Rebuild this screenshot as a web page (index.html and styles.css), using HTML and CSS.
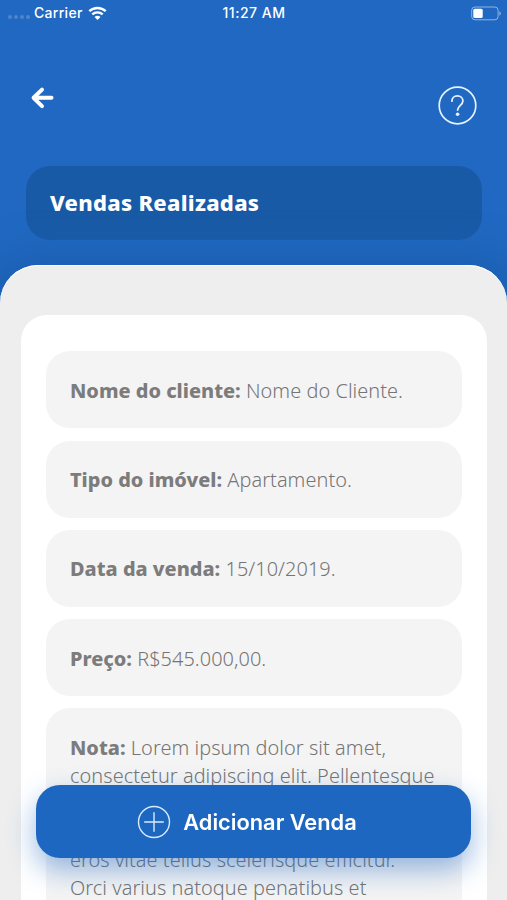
FILE: index.html
```html
<!DOCTYPE html>
<html lang="pt-BR">
<head>
  <meta charset="UTF-8">
  <meta name="viewport" content="width=device-width, initial-scale=1.0">
  <title>Vendas Realizadas</title>
  <link rel="stylesheet" href="styles.css">
</head>

<body>

  <div class="status-bar">
    <div class="carrier">
      <span class="signal"><i></i><i></i><i></i><i></i></span>
      <span class="name">Carrier</span>
      <svg class="wifi" width="19" height="15" viewBox="0 0 19 15">
        <path d="M1.3 5.2a12 12 0 0 1 16.4 0M4.3 8.4a7.7 7.7 0 0 1 10.4 0" fill="none" stroke="#fff" stroke-width="2.4"/>
        <path d="M6.5 11.1a4.5 4.5 0 0 1 6 0l-3 3z" fill="#fff"/>
      </svg>
    </div>
    <div class="time">11:27 AM</div>
    <div class="battery">
      <svg width="30" height="15" viewBox="0 0 30 15">
        <rect x=".7" y="1" width="26.4" height="12.8" rx="3.3" fill="none" stroke="#fff" stroke-opacity=".5"/>
        <rect x="2.3" y="2.8" width="9.4" height="9.2" rx="1.5" fill="#fff"/>
        <path d="M28.4 5.2q1.4.5 1.4 2.2t-1.4 2.2z" fill="#fff" fill-opacity=".5"/>
      </svg>
    </div>
  </div>

  <header>
    <div class="nav">
      <a class="back" href="#" aria-label="Voltar">
        <svg width="24" height="24" viewBox="0 0 24 24">
          <path d="M12 3.6L3.6 11.8l8.4 8.4M4 11.8h17.5" fill="none" stroke="#fff" stroke-width="4" stroke-linecap="round" stroke-linejoin="round"/>
        </svg>
      </a>
      <a class="help" href="#" aria-label="Ajuda">
        <svg width="40" height="40" viewBox="0 0 40 40" fill="none" stroke="#e4f3ff">
          <circle cx="19.5" cy="19.5" r="18.3" stroke-width="1.7"/>
          <path d="M13.9 15.2c0-3.2 2.3-5.3 5.5-5.3s5.5 2.1 5.5 5c0 4.2-5.3 4.7-5.3 9.2" stroke-width="1.8" stroke-linecap="round"/>
          <circle cx="19.6" cy="28.2" r="1.8" fill="#e4f3ff" stroke="none"/>
        </svg>
      </a>
    </div>
    <h1>Vendas Realizadas</h1>
  </header>

  <main>
    <div class="card">
      <div class="item"><b>Nome do cliente:</b> Nome do Cliente.</div>
      <div class="item"><b>Tipo do imóvel:</b> Apartamento.</div>
      <div class="item"><b>Data da venda:</b> 15/10/2019.</div>
      <div class="item"><b>Preço:</b> R$545.000,00.</div>
      <div class="item">
        <b>Nota:</b> Lorem ipsum dolor sit amet,<br>
        consectetur adipiscing elit. Pellentesque<br>
        <br>
        <br>
        eros vitae tellus scelerisque efficitur.<br>
        Orci varius natoque penatibus et
      </div>
    </div>
  </main>

  <button class="add" type="button">
    <svg width="34" height="34" viewBox="0 0 34 34" fill="none" stroke="#d9ecff" stroke-width="1.4">
      <circle cx="17" cy="17" r="15.5"/>
      <path d="M17 7.2v19.6M7.2 17h19.6"/>
    </svg>
    <span>Adicionar Venda</span>
  </button>

</body>
</html>
```
FILE: styles.css
```css
* {
  margin: 0;
  padding: 0;
  box-sizing: border-box;
}

html {
  height: 100%;
  overflow: hidden;
}

body {
  display: flex;
  flex-direction: column;
  height: 100vh;
  overflow: hidden;
  background: #2068c1;
  font-family: 'Noto Sans', sans-serif;
}

.status-bar {
  flex: none;
  display: grid;
  grid-template-columns: 1fr auto 1fr;
  align-items: center;
  height: 26px;
  padding: 0 6px 0 8px;
  color: #fff;
  font-family: Inter, sans-serif;
  font-size: 14px;
  font-weight: 500;
  line-height: 15px;
}

.carrier {
  display: flex;
  align-items: center;
}

.name,
.time {
  margin-top: -1px;
}

.name {
  letter-spacing: 0.3px;
}

.time {
  margin-left: -1px;
  letter-spacing: 0.5px;
}

.signal {
  display: flex;
  gap: 2px;
  width: 26px;
  padding-top: 7px;
}

.signal i {
  width: 4px;
  height: 4px;
  border-radius: 50%;
  background: rgba(255, 255, 255, 0.2);
}

.wifi {
  margin-left: 5px;
}

.battery {
  display: flex;
  justify-content: flex-end;
}

header {
  flex: none;
  height: 239px;
  padding: 60px 25px 0 26px;
}

.nav {
  display: flex;
  justify-content: space-between;
  height: 80px;
  padding: 0 4px;
}

.nav svg {
  display: block;
}

h1 {
  height: 74px;
  padding: 0 24px;
  border-radius: 24px;
  background: #195aa6;
  color: #fff;
  font-size: 22px;
  font-weight: 800;
  line-height: 73px;
  letter-spacing: 0.28px;
}

main {
  position: relative;
  flex: 1;
  min-height: 0;
  padding: 50px 20px 0 21px;
  border-radius: 38px 38px 0 0;
  background: #eee;
  box-shadow: 0 10px 36px 22px #1b60b2, inset 0 1px 0 #fff;
}

.card {
  display: flex;
  flex-direction: column;
  gap: 12.3px;
  height: 100%;
  overflow: hidden;
  padding: 36.3px 25px 0 24.5px;
  border-radius: 26px 26px 0 0;
  background: #fff;
}

.item {
  flex: none;
  padding: 25.5px 24px 23.5px 24.5px;
  border-radius: 24px;
  background: #f4f4f4;
  color: #757575;
  font-size: 19.9px;
  font-weight: 300;
  line-height: 28px;
  letter-spacing: 0.06px;
  white-space: nowrap;
}

.item b {
  color: #7c7c7c;
  font-weight: 800;
  letter-spacing: 0;
}

.add {
  position: fixed;
  left: 36px;
  right: 36px;
  bottom: 42px;
  display: flex;
  align-items: center;
  justify-content: center;
  gap: 12px;
  height: 73px;
  padding-right: 13px;
  border: none;
  border-radius: 24px;
  background: #1d67c0;
  box-shadow: 0 12px 28px rgba(29, 103, 192, 0.45);
  color: #fff;
  font-family: Inter, sans-serif;
  font-size: 21.8px;
  font-weight: 600;
}
```
